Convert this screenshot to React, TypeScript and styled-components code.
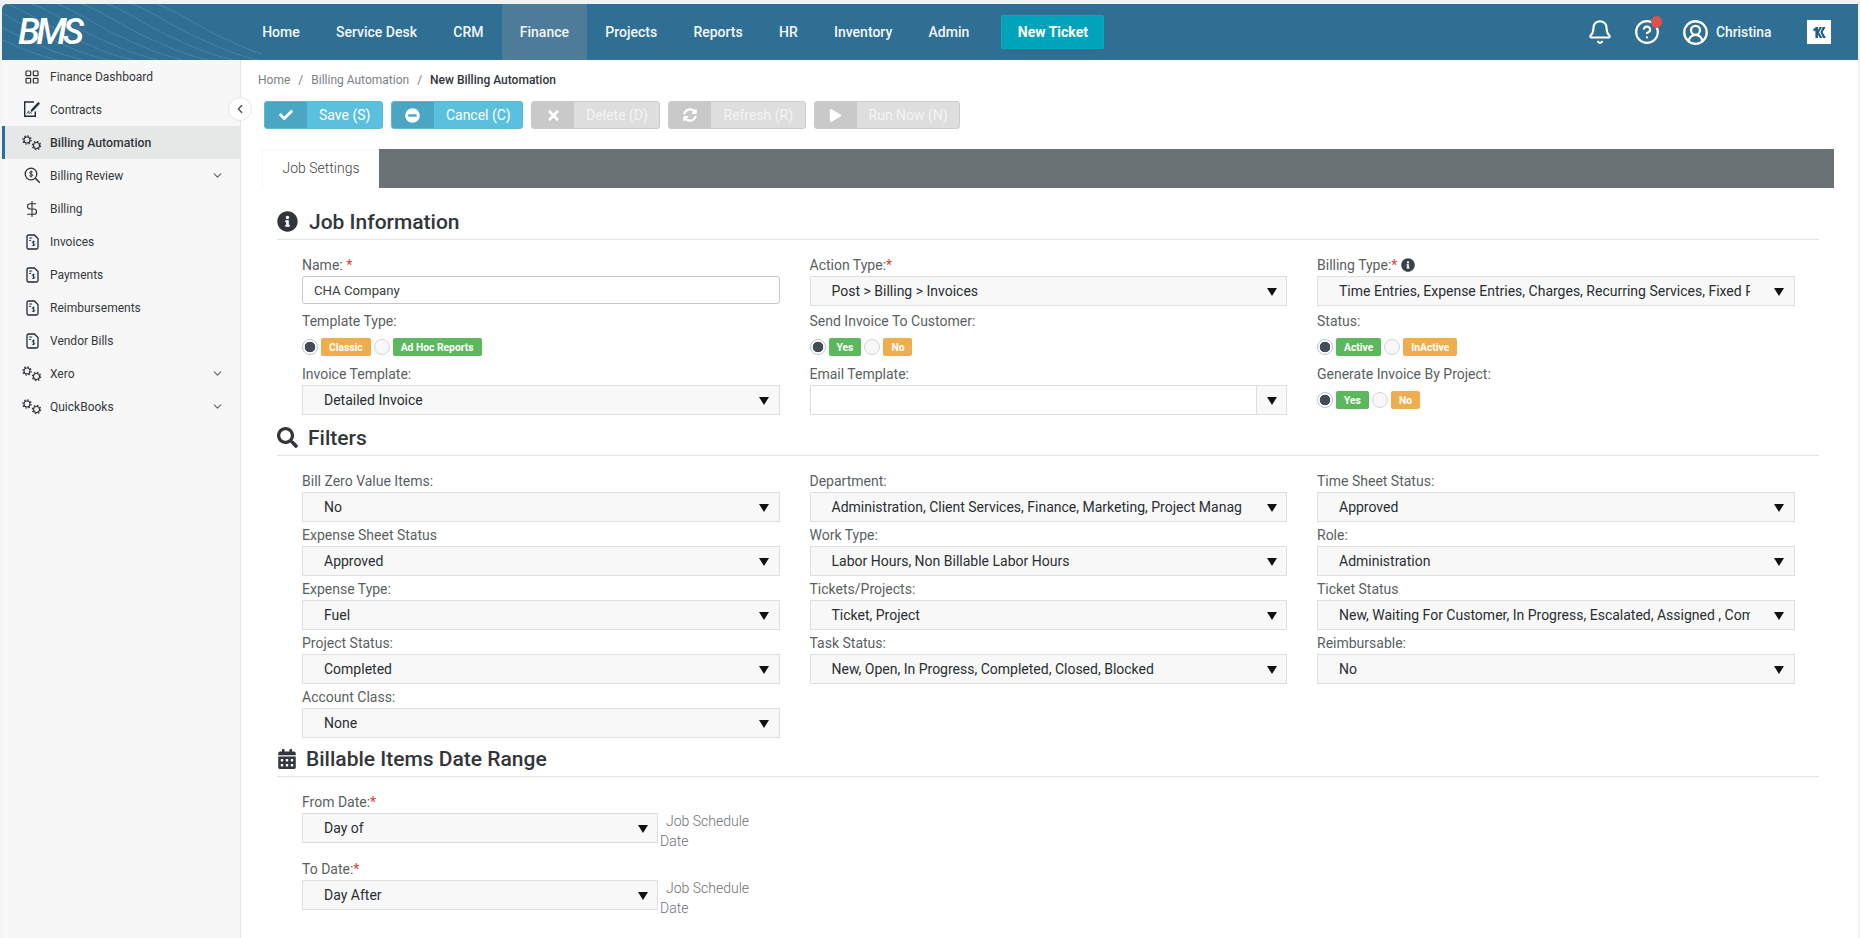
import { Fragment, ReactNode } from 'react';
import styled, { createGlobalStyle } from 'styled-components';
import {
  Bell,
  ChevronDown,
  ChevronLeft,
  CircleHelp,
  CircleUserRound,
  DollarSign,
  LayoutGrid,
} from 'lucide-react';
import {
  FaCalendarAlt,
  FaCheck,
  FaInfoCircle,
  FaMinusCircle,
  FaPlay,
  FaSearch,
  FaSyncAlt,
  FaTimes,
} from 'react-icons/fa';

const GlobalStyle = createGlobalStyle`
  html, body {
    margin: 0;
    padding: 0;
    background: #f1f2f2;
  }
  * {
    box-sizing: border-box;
  }
  body {
    font-family: Roboto, "Liberation Sans", sans-serif;
    font-size: 14px;
    color: #555;
  }
`;

const Page = styled.div`
  height: 938px;
  overflow: hidden;
  padding: 4px 2px 0;
  display: flex;
  flex-direction: column;
`;

const Header = styled.header`
  position: relative;
  height: 56px;
  flex: none;
  display: flex;
  align-items: stretch;
  background: #306f94;
  color: #fff;
  border-radius: 5px 0 0 0;
  overflow: hidden;
`;

const Waves = styled.svg`
  position: absolute;
  left: 0;
  top: 0;
  width: 260px;
  height: 56px;
  pointer-events: none;
`;

const LogoBox = styled.div`
  position: relative;
  width: 242px;
  padding-left: 16px;
  display: flex;
  align-items: center;
`;

const Logo = styled.span`
  font-size: 36px;
  font-style: italic;
  font-weight: 500;
  letter-spacing: -3.9px;
  line-height: 1;
  color: #fff;
`;

const NavItem = styled.a<{ $active?: boolean }>`
  display: flex;
  align-items: center;
  padding: 0 18.15px;
  font-size: 14px;
  font-weight: 500;
  color: #f2f6f8;
  background: ${(p) => (p.$active ? '#4c7c98' : 'transparent')};
`;

const NewTicket = styled.button`
  align-self: center;
  margin-left: 14px;
  width: 103px;
  height: 34px;
  border: 1px dotted #14adc0;
  border-radius: 2px;
  background: #00a4ba;
  color: #fff;
  font-family: inherit;
  font-size: 14px;
  font-weight: 700;
`;

const HeaderRight = styled.div`
  margin-left: auto;
  display: flex;
  align-items: center;
  padding-right: 27px;
`;

const IconWrap = styled.span<{ $width: number }>`
  position: relative;
  display: flex;
  justify-content: center;
  width: ${(p) => p.$width}px;
`;

const Dot = styled.span`
  position: absolute;
  top: -3px;
  left: 31px;
  width: 11px;
  height: 12px;
  border-radius: 50%;
  background: #e2504c;
`;

const UserName = styled.span`
  width: 91px;
  font-size: 13.8px;
  font-weight: 500;
  color: #f2f6f8;
`;

const Body = styled.div`
  flex: 1;
  display: flex;
  min-height: 0;
  background: #fff;
`;

const Sidebar = styled.aside`
  position: relative;
  width: 239px;
  flex: none;
  background: #f7f7f7;
  border-right: 1px solid #e4e4e4;
`;

const SideItem = styled.div<{ $active?: boolean }>`
  display: flex;
  align-items: center;
  height: 33px;
  padding-left: 18px;
  font-size: ${(p) => (p.$active ? '12.3px' : '12px')};
  font-weight: ${(p) => (p.$active ? 500 : 400)};
  color: #34383c;
  background: ${(p) => (p.$active ? '#e6e7e7' : 'transparent')};
  border-left: 3px solid ${(p) => (p.$active ? '#306f94' : 'transparent')};
`;

const SideIcon = styled.span`
  display: flex;
  justify-content: center;
  width: 22px;
  margin-right: 7px;
  margin-left: -2px;
  color: #2d3238;
`;

const SideChevron = styled.span`
  margin-left: auto;
  margin-right: 16px;
  display: flex;
  color: #5d6166;
`;

const CollapseButton = styled.button`
  position: absolute;
  top: 37px;
  right: -12px;
  width: 24px;
  height: 24px;
  padding: 0;
  display: flex;
  align-items: center;
  justify-content: center;
  border: 1px solid #e6e6e6;
  border-radius: 50%;
  background: #fff;
  color: #444;
`;

const Main = styled.main`
  flex: 1;
  min-width: 0;
`;

const Breadcrumb = styled.div`
  height: 40px;
  margin-bottom: 1px;
  padding-left: 17px;
  display: flex;
  align-items: center;
  font-size: 12px;
  color: #7b8084;
`;

const CrumbSep = styled.span`
  margin: 0 8px;
`;

const CrumbCurrent = styled.span`
  font-weight: 500;
  color: #30343a;
`;

const Toolbar = styled.div`
  display: flex;
  gap: 8px;
  padding-left: 23px;
`;

const ActionButton = styled.div<{ $disabled?: boolean }>`
  display: flex;
  height: 28px;
  overflow: hidden;
  border-radius: 3px;
  border: 1px solid ${(p) => (p.$disabled ? '#cbcbcb' : '#5bb9d8')};
  background: ${(p) => (p.$disabled ? '#dedede' : '#5bc0de')};
  color: ${(p) => (p.$disabled ? '#f4f4f4' : '#fff')};
  font-size: 14px;
  font-weight: 400;
`;

const ActionIcon = styled.span<{ $disabled?: boolean }>`
  width: 42px;
  display: flex;
  align-items: center;
  justify-content: center;
  background: ${(p) => (p.$disabled ? '#c9c9c9' : '#4aa6c3')};
  color: #fff;
`;

const ActionLabel = styled.span`
  display: flex;
  align-items: center;
  padding: 0 11.5px 0 12px;
`;

const TabStrip = styled.div`
  display: flex;
  width: 1572px;
  height: 39px;
  margin: 20px 0 0 21px;
  background: #697174;
`;

const Tab = styled.div`
  width: 117px;
  padding-bottom: 2px;
  display: flex;
  align-items: center;
  justify-content: center;
  background: #fff;
  border: 1px solid #f7f7f7;
  border-width: 1px 0 0 1px;
  font-size: 14px;
  font-weight: 300;
  color: #444;
`;

const Section = styled.section<{ $first?: boolean }>`
  width: 1542px;
  margin-left: 36px;
  margin-top: ${(p) => (p.$first ? '17px' : '4px')};
`;

const SectionTitle = styled.h2<{ $gap: number }>`
  display: flex;
  align-items: center;
  gap: ${(p) => p.$gap}px;
  height: 35px;
  margin: 0;
  padding-bottom: 1px;
  border-bottom: 1px solid #e4e6e6;
  font-size: 21px;
  font-weight: 500;
  color: #32363a;
`;

const FieldGrid = styled.div<{ $rowGap: number }>`
  display: grid;
  grid-template-columns: repeat(3, 477.5px);
  column-gap: 30px;
  row-gap: ${(p) => p.$rowGap}px;
  margin-left: 25px;
  padding-top: 15px;
`;

const FieldColumn = styled.div`
  display: flex;
  flex-direction: column;
`;

const Label = styled.label`
  display: flex;
  align-items: center;
  height: 21px;
  padding-bottom: 2px;
  font-size: 14px;
  font-weight: 400;
  color: #5a5f63;
  white-space: pre;
`;

const Required = styled.span`
  color: #e53e30;
`;

const InfoBadge = styled.span`
  display: flex;
  margin-left: 4px;
  color: #3b4149;
`;

const TextInput = styled.div`
  height: 28px;
  padding-left: 11px;
  display: flex;
  align-items: center;
  border: 1px solid #c8c8c8;
  border-radius: 3px;
  background: #fff;
  font-size: 13.2px;
  color: #3a3e42;
`;

const SelectBox = styled.div<{ $empty?: boolean }>`
  display: flex;
  height: 30px;
  width: 100%;
  border: 1px solid #dfdfdf;
  background: ${(p) => (p.$empty ? '#fff' : '#f8f8f8')};
  font-size: 14px;
  color: #2a2e32;
`;

const SelectValue = styled.span`
  flex: 1;
  min-width: 0;
  padding-left: 21px;
  margin-right: 14px;
  overflow: hidden;
  white-space: nowrap;
  line-height: 28px;
`;

const SelectArrow = styled.span<{ $split?: boolean }>`
  width: 30px;
  flex: none;
  display: flex;
  align-items: center;
  justify-content: center;
  background: #f8f8f8;
  border-left: 1px solid ${(p) => (p.$split ? '#dfdfdf' : 'transparent')};

  &::after {
    content: '';
    margin-top: 2px;
    border-style: solid;
    border-width: 8px 5px 0;
    border-color: #111 transparent transparent;
  }
`;

const RadioRow = styled.div`
  display: flex;
  align-items: center;
  gap: 3px;
  height: 18px;
  margin: 6px 0 8px;
`;

const Radio = styled.span<{ $checked?: boolean }>`
  width: 16px;
  height: 16px;
  border-radius: 50%;
  border: 1px solid ${(p) => (p.$checked ? '#b8c6d2' : '#d4d4d4')};
  background: ${(p) => (p.$checked ? 'radial-gradient(circle, #454c55 0 5px, #fff 5.6px)' : '#f8f8f8')};
`;

const Badge = styled.span<{ $tone: 'green' | 'orange' }>`
  height: 18px;
  padding: 0 8px;
  display: flex;
  align-items: center;
  border-radius: 2px;
  background: ${(p) => (p.$tone === 'green' ? '#5cb85c' : '#f0ad4e')};
  color: #fff;
  font-size: 10.3px;
  font-weight: 700;
`;

const Gap = styled.div<{ $height: number }>`
  height: ${(p) => p.$height}px;
`;

const DateFields = styled.div`
  margin-left: 25px;
  padding-top: 15px;
  display: flex;
  flex-direction: column;
  gap: 8px;
`;

const DateField = styled.div`
  width: 450px;
`;

const DateRow = styled.div`
  display: flex;
`;

const DateSelect = styled.div`
  width: 356px;
  flex: none;
`;

const DateNote = styled.div`
  width: 92px;
  margin-left: 2px;
  margin-top: -2px;
  line-height: 20px;
  text-indent: 6px;
  font-size: 14px;
  font-weight: 300;
  color: #6d7175;
`;

function GearsIcon() {
  return (
    <svg width="22" height="18" viewBox="0 0 22 18" fill="none" stroke="#2d3238">
      <circle cx="6" cy="6" r="3" strokeWidth="1.1" />
      <circle cx="6" cy="6" r="4.1" strokeWidth="1.2" strokeDasharray="1.6 1.6" />
      <circle cx="15.5" cy="11.5" r="3" strokeWidth="1.1" />
      <circle cx="15.5" cy="11.5" r="4.1" strokeWidth="1.2" strokeDasharray="1.6 1.6" />
    </svg>
  );
}

function InvoiceIcon() {
  return (
    <svg width="13" height="16" viewBox="0 0 13 16" fill="none" stroke="#1f2a3a" strokeWidth="1.3">
      <path d="M2.5 1h5.8L12 4.6V13.5a1.5 1.5 0 0 1-1.5 1.5h-8A1.5 1.5 0 0 1 1 13.5v-11A1.5 1.5 0 0 1 2.5 1z" />
      <path d="M3.2 4h3M3.2 6.4h2" strokeWidth="1" />
      <path d="M8.8 7.8c-.4-.6-2.4-.8-2.6.4-.2 1.4 2.8 1 2.6 2.5-.2 1.2-2.3 1-2.9.3M7.5 6.8v5.2" strokeWidth="0.9" />
    </svg>
  );
}

function SearchDollarIcon() {
  return (
    <svg width="17" height="17" viewBox="0 0 17 17" fill="none" stroke="#2d3238" strokeWidth="1.3">
      <circle cx="7" cy="7" r="5.8" />
      <path d="M11.3 11.3L15.8 15.8" strokeWidth="1.5" />
      <path d="M8.8 5.2c-.4-.7-3-.9-3.2.5-.2 1.4 3.4 1 3.2 2.6-.2 1.3-2.8 1.1-3.4.3M7.1 3.6v6.8" strokeWidth="1" />
    </svg>
  );
}

function ContractIcon() {
  return (
    <svg width="18" height="17" viewBox="0 0 18 17" fill="none" stroke="#1f2a3a" strokeWidth="1.4">
      <path d="M11 1H1.7V15.3H12.3V10.5" />
      <path d="M16.6 2.6L10 9.6 8 10.4 8.6 8.4 15.2 1.4z" fill="#1f2a3a" strokeWidth="0.8" />
      <path d="M3.6 12.6c1-.2 1.2-2.6 2-2.4.7.2-.2 2.4.6 2.4.6 0 .8-1 1.4-1 .5 0 .6.8 1.3.8" strokeWidth="0.9" />
    </svg>
  );
}

function KaseyaMark() {
  return (
    <svg width="24" height="24" viewBox="0 0 24 24">
      <rect width="24" height="24" fill="#fff" />
      <path d="M6 9.5l3-2.5h2v11H8.4V10.4L7 11.5z" fill="#1f5f82" />
      <path d="M12.5 7h2.5l-3 5.5 3.6 5.5h-2.8l-2.8-5.5z" fill="#1f5f82" />
      <path d="M15.6 7H18.6L15.6 12.3 19 18H16.2L13.4 12.4z" fill="#1f5f82" />
    </svg>
  );
}

function Select({ value, split }: { value?: string; split?: boolean }) {
  return (
    <SelectBox $empty={split}>
      <SelectValue>{value}</SelectValue>
      <SelectArrow $split={split} />
    </SelectBox>
  );
}

function Field({ label, star, children }: { label: string; star?: boolean; children: ReactNode }) {
  return (
    <div>
      <Label>
        {label}
        {star && <Required>*</Required>}
      </Label>
      {children}
    </div>
  );
}

type Choice = { text: string; tone: 'green' | 'orange' };

function RadioGroup({ choices }: { choices: Choice[] }) {
  return (
    <RadioRow>
      {choices.map((c, i) => (
        <Fragment key={c.text}>
          <Radio $checked={i === 0} />
          <Badge $tone={c.tone}>{c.text}</Badge>
        </Fragment>
      ))}
    </RadioRow>
  );
}

const navItems = ['Home', 'Service Desk', 'CRM', 'Finance', 'Projects', 'Reports', 'HR', 'Inventory', 'Admin'];

const sideItems: { name: string; icon: ReactNode; chevron?: boolean }[] = [
  { name: 'Finance Dashboard', icon: <LayoutGrid size={16} strokeWidth={1.8} /> },
  { name: 'Contracts', icon: <ContractIcon /> },
  { name: 'Billing Automation', icon: <GearsIcon /> },
  { name: 'Billing Review', icon: <SearchDollarIcon />, chevron: true },
  { name: 'Billing', icon: <DollarSign size={18} strokeWidth={1.5} /> },
  { name: 'Invoices', icon: <InvoiceIcon /> },
  { name: 'Payments', icon: <InvoiceIcon /> },
  { name: 'Reimbursements', icon: <InvoiceIcon /> },
  { name: 'Vendor Bills', icon: <InvoiceIcon /> },
  { name: 'Xero', icon: <GearsIcon />, chevron: true },
  { name: 'QuickBooks', icon: <GearsIcon />, chevron: true },
];

const actions = [
  { text: 'Save (S)', icon: <FaCheck size={14} /> },
  { text: 'Cancel (C)', icon: <FaMinusCircle size={15} /> },
  { text: 'Delete (D)', icon: <FaTimes size={15} />, disabled: true },
  { text: 'Refresh (R)', icon: <FaSyncAlt size={14} />, disabled: true },
  { text: 'Run Now (N)', icon: <FaPlay size={13} />, disabled: true },
];

const filters: { label: string; value: string }[] = [
  { label: 'Bill Zero Value Items:', value: 'No' },
  { label: 'Department:', value: 'Administration, Client Services, Finance, Marketing, Project Management, Sales' },
  { label: 'Time Sheet Status:', value: 'Approved' },
  { label: 'Expense Sheet Status', value: 'Approved' },
  { label: 'Work Type:', value: 'Labor Hours, Non Billable Labor Hours' },
  { label: 'Role:', value: 'Administration' },
  { label: 'Expense Type:', value: 'Fuel' },
  { label: 'Tickets/Projects:', value: 'Ticket, Project' },
  { label: 'Ticket Status', value: 'New, Waiting For Customer, In Progress, Escalated, Assigned , Completed, Closed' },
  { label: 'Project Status:', value: 'Completed' },
  { label: 'Task Status:', value: 'New, Open, In Progress, Completed, Closed, Blocked' },
  { label: 'Reimbursable:', value: 'No' },
  { label: 'Account Class:', value: 'None' },
];

// diagonal lines behind the logo
const waveStarts = [-70, -45, -20, 5, 30, 55, 80, 105, 130, 155];

export default function App() {
  return (
    <Page>
      <GlobalStyle />
      <Header>
        <Waves viewBox="0 0 260 56" fill="none" stroke="#ffffff" strokeOpacity="0.13">
          {waveStarts.map((x) => (
            <path key={x} d={`M${x} 0C${x + 22} 8 ${x + 40} 22 ${x + 62} 32S${x + 100} 50 ${x + 126} 56`} />
          ))}
        </Waves>
        <LogoBox>
          <Logo>BMS</Logo>
        </LogoBox>
        {navItems.map((item) => (
          <NavItem key={item} $active={item === 'Finance'}>
            {item}
          </NavItem>
        ))}
        <NewTicket>New Ticket</NewTicket>
        <HeaderRight>
          <IconWrap $width={40}>
            <Bell size={26} strokeWidth={1.9} />
          </IconWrap>
          <IconWrap $width={54}>
            <CircleHelp size={26} strokeWidth={2} />
            <Dot />
          </IconWrap>
          <IconWrap $width={42}>
            <CircleUserRound size={27} strokeWidth={2} />
          </IconWrap>
          <UserName>Christina</UserName>
          <KaseyaMark />
        </HeaderRight>
      </Header>
      <Body>
        <Sidebar>
          {sideItems.map((item) => (
            <SideItem key={item.name} $active={item.name === 'Billing Automation'}>
              <SideIcon>{item.icon}</SideIcon>
              {item.name}
              {item.chevron && (
                <SideChevron>
                  <ChevronDown size={13} />
                </SideChevron>
              )}
            </SideItem>
          ))}
          <CollapseButton>
            <ChevronLeft size={14} />
          </CollapseButton>
        </Sidebar>
        <Main>
          <Breadcrumb>
            Home
            <CrumbSep>/</CrumbSep>
            Billing Automation
            <CrumbSep>/</CrumbSep>
            <CrumbCurrent>New Billing Automation</CrumbCurrent>
          </Breadcrumb>
          <Toolbar>
            {actions.map((a) => (
              <ActionButton key={a.text} $disabled={a.disabled}>
                <ActionIcon $disabled={a.disabled}>{a.icon}</ActionIcon>
                <ActionLabel>{a.text}</ActionLabel>
              </ActionButton>
            ))}
          </Toolbar>
          <TabStrip>
            <Tab>Job Settings</Tab>
          </TabStrip>

          <Section $first>
            <SectionTitle $gap={11}>
              <FaInfoCircle size={21} />
              Job Information
            </SectionTitle>
            <FieldGrid $rowGap={0}>
              <FieldColumn>
                <Label>
                  {'Name: '}
                  <Required>*</Required>
                </Label>
                <TextInput>CHA Company</TextInput>
                <Gap $height={7} />
                <Label>Template Type:</Label>
                <RadioGroup
                  choices={[
                    { text: 'Classic', tone: 'orange' },
                    { text: 'Ad Hoc Reports', tone: 'green' },
                  ]}
                />
                <Field label="Invoice Template:">
                  <Select value="Detailed Invoice" />
                </Field>
              </FieldColumn>
              <FieldColumn>
                <Field label="Action Type:" star>
                  <Select value="Post > Billing > Invoices" />
                </Field>
                <Gap $height={5} />
                <Label>Send Invoice To Customer:</Label>
                <RadioGroup
                  choices={[
                    { text: 'Yes', tone: 'green' },
                    { text: 'No', tone: 'orange' },
                  ]}
                />
                <Field label="Email Template:">
                  <Select split />
                </Field>
              </FieldColumn>
              <FieldColumn>
                <Label>
                  Billing Type:<Required>*</Required>
                  <InfoBadge>
                    <FaInfoCircle size={14} />
                  </InfoBadge>
                </Label>
                <Select value="Time Entries, Expense Entries, Charges, Recurring Services, Fixed Price, Retainers" />
                <Gap $height={5} />
                <Label>Status:</Label>
                <RadioGroup
                  choices={[
                    { text: 'Active', tone: 'green' },
                    { text: 'InActive', tone: 'orange' },
                  ]}
                />
                <Label>Generate Invoice By Project:</Label>
                <RadioGroup
                  choices={[
                    { text: 'Yes', tone: 'green' },
                    { text: 'No', tone: 'orange' },
                  ]}
                />
              </FieldColumn>
            </FieldGrid>
          </Section>

          <Section>
            <SectionTitle $gap={10}>
              <FaSearch size={21} />
              Filters
            </SectionTitle>
            <FieldGrid $rowGap={3}>
              {filters.map((f) => (
                <Field key={f.label} label={f.label}>
                  <Select value={f.value} />
                </Field>
              ))}
            </FieldGrid>
          </Section>

          <Section>
            <SectionTitle $gap={9}>
              <FaCalendarAlt size={20} />
              Billable Items Date Range
            </SectionTitle>
            <DateFields>
              <DateField>
                <Label>
                  From Date:<Required>*</Required>
                </Label>
                <DateRow>
                  <DateSelect>
                    <Select value="Day of" />
                  </DateSelect>
                  <DateNote>Job Schedule Date</DateNote>
                </DateRow>
              </DateField>
              <DateField>
                <Label>
                  To Date:<Required>*</Required>
                </Label>
                <DateRow>
                  <DateSelect>
                    <Select value="Day After" />
                  </DateSelect>
                  <DateNote>Job Schedule Date</DateNote>
                </DateRow>
              </DateField>
            </DateFields>
          </Section>
        </Main>
      </Body>
    </Page>
  );
}
